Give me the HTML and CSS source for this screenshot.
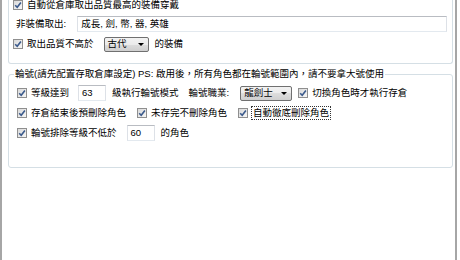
FILE: index.html
```html
<!DOCTYPE html>
<html>
<head lang="zh-Hant">
    <meta charset="UTF-8">
    <title>倉庫設定</title>
    <link rel="stylesheet" href="styles.css">
</head>
<body>
<div class="win">
    <div class="group group-top">
        <div class="row row-first">
            <label class="chk"><span class="cb"><svg viewBox="0 0 8 8"><path d="M1.2 4.2 L3.2 6.3 L6.9 1.4"/></svg></span>自動從倉庫取出品質最高的裝備穿戴</label>
        </div>
        <div class="row row-gap">
            <span class="lbl">非裝備取出:</span>
            <span class="edit wide">成長, 劍, 幣, 器, 英雄</span>
        </div>
        <div class="row">
            <label class="chk"><span class="cb"><svg viewBox="0 0 8 8"><path d="M1.2 4.2 L3.2 6.3 L6.9 1.4"/></svg></span>取出品質不高於</label>
            <span class="combo combo-grade">古代</span>
            <span class="txt">的裝備</span>
        </div>
    </div>

    <fieldset class="group group-alt">
        <legend>輪號(請先配置存取倉庫設定) PS: 啟用後，所有角色都在輪號範圍內，請不要拿大號使用</legend>
        <div class="row">
            <label class="chk"><span class="cb"><svg viewBox="0 0 8 8"><path d="M1.2 4.2 L3.2 6.3 L6.9 1.4"/></svg></span>等級達到</label>
            <span class="edit num">63</span>
            <span class="txt">級執行輪號模式</span>
            <span class="txt txt-far">輪號職業:</span>
            <span class="combo combo-job">龍劍士</span>
            <label class="chk chk-near"><span class="cb"><svg viewBox="0 0 8 8"><path d="M1.2 4.2 L3.2 6.3 L6.9 1.4"/></svg></span>切換角色時才執行存倉</label>
        </div>
        <div class="row">
            <label class="chk"><span class="cb"><svg viewBox="0 0 8 8"><path d="M1.2 4.2 L3.2 6.3 L6.9 1.4"/></svg></span>存倉結束後預刪除角色</label>
            <label class="chk chk-next"><span class="cb"><svg viewBox="0 0 8 8"><path d="M1.2 4.2 L3.2 6.3 L6.9 1.4"/></svg></span>未存完不刪除角色</label>
            <label class="chk chk-next"><span class="cb"><svg viewBox="0 0 8 8"><path d="M1.2 4.2 L3.2 6.3 L6.9 1.4"/></svg></span><span class="focus">自動徹底刪除角色</span></label>
        </div>
        <div class="row">
            <label class="chk"><span class="cb"><svg viewBox="0 0 8 8"><path d="M1.2 4.2 L3.2 6.3 L6.9 1.4"/></svg></span>輪號排除等級不低於</label>
            <span class="edit num num-far">60</span>
            <span class="txt">的角色</span>
        </div>
    </fieldset>
</div>
</body>
</html>
```

FILE: styles.css
```css
* { margin: 0; padding: 0; box-sizing: border-box; }
body { width: 457px; height: 260px; background: #fff; color: #000;
    font: 9.5px/12px "Liberation Sans", "Noto Sans CJK TC", sans-serif; }
.win { height: 260px; border-left: 2px solid #a6a6a6; border-right: 2px solid #a6a6a6;
    padding: 0 2px 0 6px; }

.group { border: 1px solid #d5dfe5; border-radius: 3px; }
.group-top { height: 64px; border-top: 0; border-radius: 0 0 3px 3px; padding: 0 4px; }
.group-alt { margin: 4px 0 0; padding: 5px 7px 26px 8px; min-inline-size: 0; }
.group-alt legend { margin-left: -3px; padding: 0 1px; line-height: 12px; }
.group-alt .row + .row { margin-top: 4px; }

.row { display: flex; align-items: center; height: 16px; white-space: nowrap; }
.row-first { height: 10px; }
.row-gap { margin: 6px 0 4px; }

.chk { display: flex; align-items: center; }
.chk-near { margin-left: 6px; }
.chk-next { margin-left: 11px; }
.cb { width: 10px; height: 10px; margin-right: 4px; border: 1px solid #8f8f8f;
    background: linear-gradient(135deg, #d9d9d9, #f7f7f7); display: flex;
    align-items: center; justify-content: center; }
.cb svg { width: 8px; height: 8px; }
.cb path { fill: none; stroke: #3b5a8c; stroke-width: 1.6; }
.focus { outline: 1px dotted #333; padding: 0 1px; }

.lbl { margin-left: 3px; }
.txt { margin-left: 6px; }
.txt-far { margin-left: 10px; }

.edit { height: 16px; display: flex; align-items: center; padding: 0 3px;
    border: 1px solid; border-color: #b9bcc2 #dde1e7 #e3e9ef #dde1e7; background: #fff; }
.wide { width: 370px; margin-left: 11px; }
.num { width: 28px; margin-left: 9px; }
.num-far { margin-left: 10px; }

.combo { height: 15px; display: flex; align-items: center; justify-content: space-between;
    padding-left: 3px; border: 1px solid #707070; border-radius: 2px;
    background: linear-gradient(#f2f2f2, #ebebeb 50%, #dddddd 50%, #cfcfcf); }
.combo::after { content: ""; margin-right: 4px; border-top: 3px solid #000;
    border-left: 3px solid transparent; border-right: 3px solid transparent; }
.combo-grade { width: 45px; margin-left: 10px; }
.combo-job { width: 52px; margin-left: 11px; }
```
